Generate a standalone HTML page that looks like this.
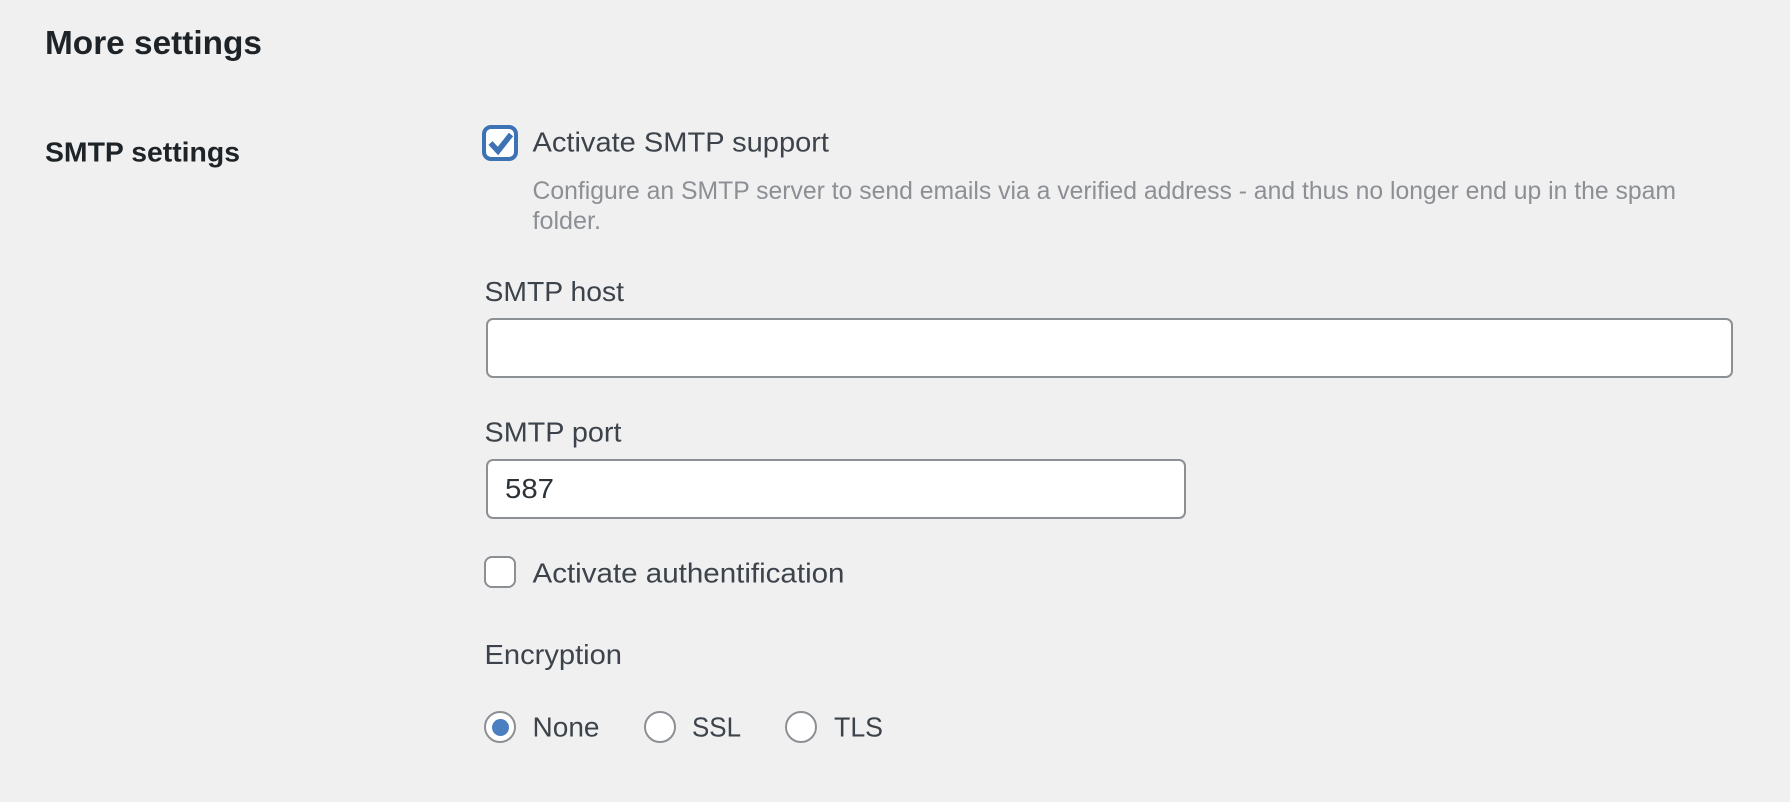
<!DOCTYPE html>
<html lang="en">
<head>
<meta charset="utf-8">
<title>More settings</title>
<style>
html,body{margin:0;padding:0;width:1790px;height:802px;overflow:hidden;background:#f0f0f1;}
.box{position:absolute;box-sizing:border-box;background:#fff;border:2px solid #8c8f94;}
.input{border-radius:7px;}
.chk{border-radius:8px;}
.radio{border-radius:50%;}
svg{position:absolute;left:0;top:0;}
text{font-family:"Liberation Sans",sans-serif;}
.h{font-weight:700;fill:#1d2327;}
.l{font-size:28px;fill:#3c434a;}
.d{font-size:25px;fill:#8c8f94;}
</style>
</head>
<body>
<div class="box input" style="left:486px;top:318px;width:1247px;height:60px"></div>
<div class="box input" style="left:486px;top:459px;width:700px;height:60px"></div>
<div class="box chk" style="left:482px;top:125px;width:36px;height:36px;border:4px solid #3d72b4;border-radius:9px"></div>
<div class="box chk" style="left:484px;top:556px;width:32px;height:32px"></div>
<div class="box radio" style="left:484px;top:711px;width:32px;height:32px"></div>
<div class="box radio" style="left:644px;top:711px;width:32px;height:32px"></div>
<div class="box radio" style="left:785px;top:711px;width:32px;height:32px"></div>
<div style="position:absolute;left:491.5px;top:718.5px;width:17px;height:17px;border-radius:50%;background:#4a7fc1"></div>
<svg width="1790" height="802" viewBox="0 0 1790 802" xmlns="http://www.w3.org/2000/svg">
<path d="M490.5 143 L498 151 L511 134.5" fill="none" stroke="#3d72b4" stroke-width="5.5"/>
<text class="h" x="45" y="54" font-size="33" textLength="217" lengthAdjust="spacingAndGlyphs">More settings</text>
<text class="h" x="45" y="161.5" font-size="28" textLength="195" lengthAdjust="spacingAndGlyphs">SMTP settings</text>
<text class="l" x="532.5" y="151.5" textLength="296.5" lengthAdjust="spacingAndGlyphs">Activate SMTP support</text>
<text class="d" x="532.5" y="199" textLength="1143.5" lengthAdjust="spacingAndGlyphs">Configure an SMTP server to send emails via a verified address - and thus no longer end up in the spam</text>
<text class="d" x="532.5" y="229" textLength="68.5" lengthAdjust="spacingAndGlyphs">folder.</text>
<text class="l" x="484.5" y="301" textLength="139.5" lengthAdjust="spacingAndGlyphs">SMTP host</text>
<text class="l" x="484.5" y="441.5" textLength="137" lengthAdjust="spacingAndGlyphs">SMTP port</text>
<text x="505" y="498" font-size="28" fill="#2c3338" textLength="49" lengthAdjust="spacingAndGlyphs">587</text>
<text class="l" x="532.5" y="582.5" textLength="312" lengthAdjust="spacingAndGlyphs">Activate authentification</text>
<text class="l" x="484.5" y="664" textLength="137.5" lengthAdjust="spacingAndGlyphs">Encryption</text>
<text class="l" x="532.5" y="736.5" textLength="67" lengthAdjust="spacingAndGlyphs">None</text>
<text class="l" x="692" y="736.5" textLength="49" lengthAdjust="spacingAndGlyphs">SSL</text>
<text class="l" x="834" y="736.5" textLength="49" lengthAdjust="spacingAndGlyphs">TLS</text>
</svg>
</body>
</html>
